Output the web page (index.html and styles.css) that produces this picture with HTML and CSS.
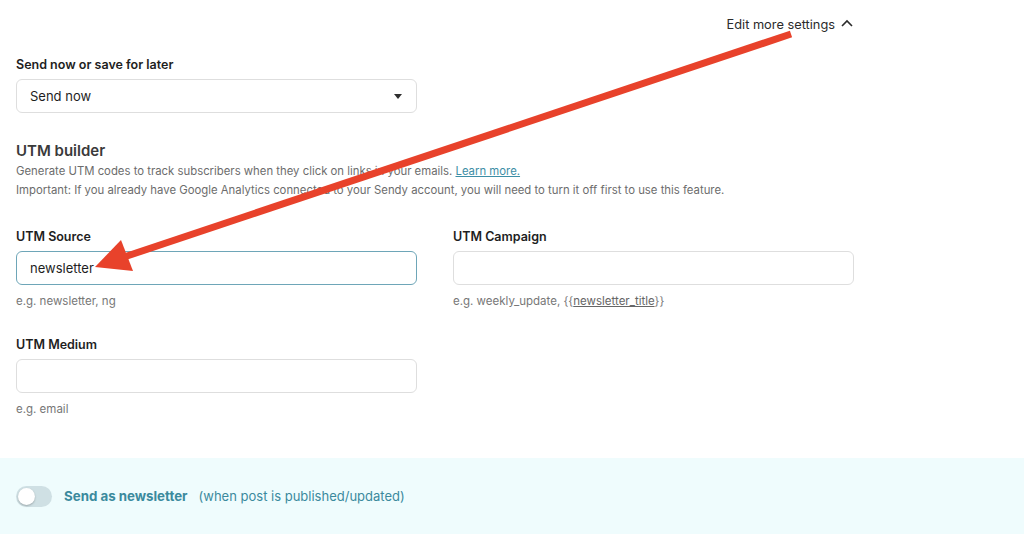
FILE: index.html
```html
<!DOCTYPE html>
<html lang="en">

<head>
  <meta charset="UTF-8" />
  <meta name="viewport" content="width=device-width, initial-scale=1.0" />
  <title>UTM builder</title>
  <link rel="stylesheet" href="styles.css">
</head>

<body>
  <div class="page">
    <!-- 顶部设置开关 -->
    <div class="top-row">
      <a href="javaScript:;" class="more">
        Edit more settings
        <svg class="chev" width="14" height="10" viewBox="0 0 14 10">
          <path d="M2 8 L7 3 L12 8" fill="none" stroke="#2b2b2b" stroke-width="1.6" />
        </svg>
      </a>
    </div>

    <div class="field send">
      <label class="label">Send now or save for later</label>
      <div class="select">
        <span>Send now</span>
        <i class="caret"></i>
      </div>
    </div>

    <h3 class="title">UTM builder</h3>
    <p class="desc">Generate UTM codes to track subscribers when they click on links in your emails. <a href="javaScript:;">Learn more.</a></p>
    <p class="desc">Important: If you already have Google Analytics connected to your Sendy account, you will need to turn it off first to use this feature.</p>

    <div class="grid">
      <div class="field">
        <label class="label">UTM Source</label>
        <div class="input focus">newsletter</div>
        <p class="help">e.g. newsletter, ng</p>
      </div>
      <div class="field">
        <label class="label">UTM Campaign</label>
        <div class="input"></div>
        <p class="help">e.g. weekly_update, {{<u>newsletter_title</u>}}</p>
      </div>
      <div class="field">
        <label class="label">UTM Medium</label>
        <div class="input"></div>
        <p class="help">e.g. email</p>
      </div>
    </div>
  </div>

  <!-- 底部发送开关 -->
  <div class="band">
    <span class="toggle"><i></i></span>
    <strong>Send as newsletter</strong>
    <span class="note">(when post is published/updated)</span>
  </div>

  <!-- 标注箭头 -->
  <svg class="arrow" width="1024" height="538" viewBox="0 0 1024 538">
    <line x1="791" y1="34" x2="124" y2="257" stroke="#e8422b" stroke-width="7" />
    <polygon points="95,267 121,240 133,271" fill="#e8422b" />
  </svg>
</body>

</html>
```

FILE: styles.css
```css
* {
  margin: 0;
  padding: 0;
  box-sizing: border-box;
}

body {
  font-family: Inter, "Noto Sans", sans-serif;
  color: #1f1f1f;
  background: #fff;
}

a {
  text-decoration: none;
  color: inherit;
}

.page {
  width: 870px;
  padding: 0 16px;
}

.top-row {
  display: flex;
  justify-content: flex-end;
  align-items: center;
  height: 48px;
}

.more {
  display: flex;
  align-items: center;
  font-size: 12.8px;
  color: #2b2b2b;
}

.chev {
  margin-left: 5px;
  margin-top: -2px;
}

.send {
  margin-top: 8px;
  width: 401px;
}

.label {
  display: block;
  font-size: 12.5px;
  font-weight: 600;
  line-height: 18px;
  margin-bottom: 5px;
  color: #1e1e1e;
}

.select,
.input {
  display: flex;
  align-items: center;
  height: 34px;
  padding: 0 13px;
  border: 1px solid #dedede;
  border-radius: 6px;
  font-size: 13px;
  color: #1e1e1e;
}

.select {
  justify-content: space-between;
}

.caret {
  width: 0;
  height: 0;
  margin-right: 1px;
  border-left: 4.5px solid transparent;
  border-right: 4.5px solid transparent;
  border-top: 5px solid #2e2e2e;
}

.input.focus {
  border-color: #6ea6b8;
}

.title {
  margin-top: 28px;
  font-size: 15px;
  font-weight: 600;
  line-height: 20px;
  color: #3a3a3a;
}

.desc {
  font-size: 11.35px;
  line-height: 19px;
  color: #6c6c6c;
}

.desc:first-of-type {
  margin-top: 1px;
}

.desc a {
  color: #3d8ea6;
  text-decoration: underline;
}

.grid {
  display: grid;
  grid-template-columns: 401px 401px;
  column-gap: 36px;
  row-gap: 27px;
  margin-top: 28px;
}

.help {
  margin-top: 8px;
  font-size: 11.5px;
  line-height: 16px;
  color: #777;
}

.help u {
  color: #666;
}

.band {
  display: flex;
  align-items: center;
  height: 76px;
  margin-top: 41px;
  padding-left: 16px;
  background: #effcfd;
  font-size: 13px;
  color: #3b8a9d;
}

.toggle {
  position: relative;
  width: 36px;
  height: 21px;
  border-radius: 11px;
  background: #cfe0e4;
  margin-right: 12px;
}

.toggle i {
  position: absolute;
  top: 2px;
  left: 2px;
  width: 17px;
  height: 17px;
  border-radius: 50%;
  background: #fff;
  box-shadow: 0 1px 2px rgba(0, 0, 0, 0.25);
}

.band strong {
  font-size: 13.3px;
  font-weight: 700;
  margin-right: 11px;
}

.arrow {
  position: absolute;
  top: 0;
  left: 0;
  pointer-events: none;
}
```
